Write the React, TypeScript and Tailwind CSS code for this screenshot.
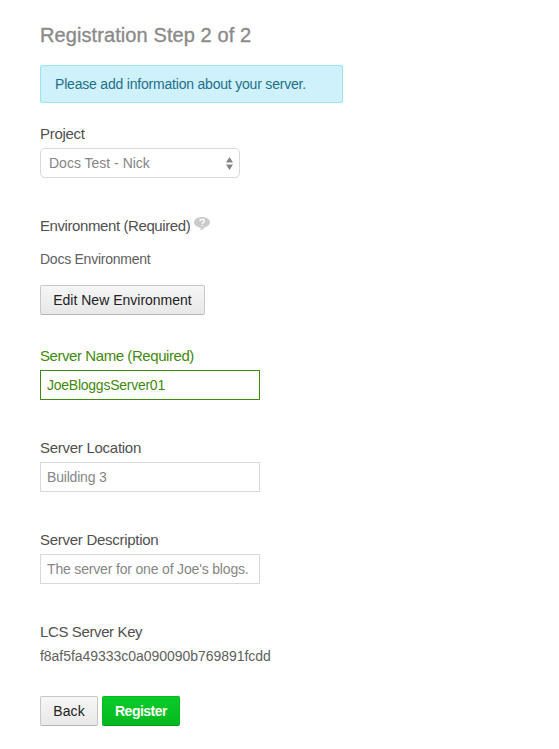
import React from "react";

function Field({ label, value, valid = false, spacing, valueSpacing }: { label: string; value: string; valid?: boolean; spacing: string; valueSpacing: string }) {
  return (
    <div className="mb-9 h-14">
      <label className={`block h-[26px] text-[15px] leading-6 ${spacing} ${valid ? "text-[#3f8a0c]" : "text-[#505050]"}`}>
        {label}
      </label>
      <input
        readOnly
        value={value}
        className={`block h-[30px] w-[220px] border bg-white px-1.5 text-[14px] outline-none ${valueSpacing} ${
          valid ? "border-[#3f8a0c] text-[#3f8a0c]" : "border-[#d9d9d9] text-[#868686]"
        }`}
      />
    </div>
  );
}

function HelpIcon() {
  return (
    <svg width="16" height="14" viewBox="0 0 16 14" className="ml-1 mt-1">
      <path d="M8 0C3.600 0 0 2.200 0 5.300c0 2.900 3.100 5.100 6.900 5.400-.1 1-.7 1.900-1.700 2.600 2.600-.3 4.600-1.400 5.700-3.100 3-.7 5.100-2.600 5.100-4.900C16 2.200 12.400 0 8 0Z" fill="#cbcbcb" />
      <path d="M6 4c.1-2.200 4.400-2.200 4.400.1 0 1.400-2.100 1.300-2.100 2.700M8.300 7.900v1.400" fill="none" stroke="#fff" strokeWidth="1.400" />
    </svg>
  );
}

export default function App() {
  return (
    <main className="flex h-[749px] flex-col items-start bg-white pl-10 pt-[21px] font-['Liberation_Sans',Arial,sans-serif] text-[14px] text-[#505050]">
      <h1 className="mb-4 h-7 whitespace-nowrap text-[20px] leading-7 tracking-[0.09px] text-[#8a8a8a] [-webkit-text-stroke:0.35px_#8a8a8a]">
        Registration Step 2 of 2
      </h1>
      <div className="h-[38px] w-[303px] rounded-[2px] border border-[#9be3f5] bg-[#cff1fb] pl-3.5 text-[14px] leading-9 tracking-[-0.2px] text-[#1f6f8b]">
        Please add information about your server.
      </div>

      <label className="mt-[19px] h-[26px] text-[15px] leading-6 tracking-[-0.3px]">Project</label>
      <button className="flex h-[30px] w-[200px] items-center justify-between rounded-[5px] border border-[#d9d9d9] bg-white pl-2 pr-1.5 text-[#868686]">
        Docs Test - Nick
        <svg width="7" height="13" viewBox="0 0 7 13" fill="#858585">
          <path d="M3.500 0 7 5.500H0ZM3.500 13 0 7.500h7Z" />
        </svg>
      </button>

      <div className="mt-[35px] flex h-[26px] text-[15px] leading-[26px]">
        <span className="tracking-[-0.41px]">Environment (Required)</span>
        <HelpIcon />
      </div>
      <p className="mt-2 h-6 leading-6 tracking-[-0.25px] text-[#606060]">Docs Environment</p>
      <button className="mb-[29px] mt-3.5 h-[30px] w-[165px] whitespace-nowrap rounded-[2px] border border-[#c8c8c8] border-b-[#b5b5b5] bg-gradient-to-b from-[#f6f6f6] to-[#e8e8e8] text-[#222]">
        Edit New Environment
      </button>

      <Field label="Server Name (Required)" value="JoeBloggsServer01" valid spacing="tracking-[-0.43px]" valueSpacing="tracking-[-0.25px]" />
      <Field label="Server Location" value="Building 3" spacing="tracking-[-0.27px]" valueSpacing="tracking-[-0.2px]" />
      <Field label="Server Description" value="The server for one of Joe's blogs." spacing="tracking-[-0.28px]" valueSpacing="tracking-[-0.17px]" />

      <h2 className="h-6 text-[15px] leading-6 tracking-[-0.38px]">LCS Server Key</h2>
      <p className="h-6 leading-6 tracking-[-0.04px] text-[#606060]">f8af5fa49333c0a090090b769891fcdd</p>

      <div className="mt-7 flex gap-1">
        <button className="h-[30px] w-[58px] rounded-[2px] border border-[#c8c8c8] border-b-[#b5b5b5] bg-gradient-to-b from-[#f6f6f6] to-[#e8e8e8] tracking-[0.1px] text-[#222]">
          Back
        </button>
        <button className="h-[30px] w-[78px] rounded-[2px] border border-[#06b821] border-b-[#059c1a] bg-gradient-to-b from-[#0acb28] to-[#05b920] font-bold tracking-[-0.5px] text-white">
          Register
        </button>
      </div>
    </main>
  );
}
